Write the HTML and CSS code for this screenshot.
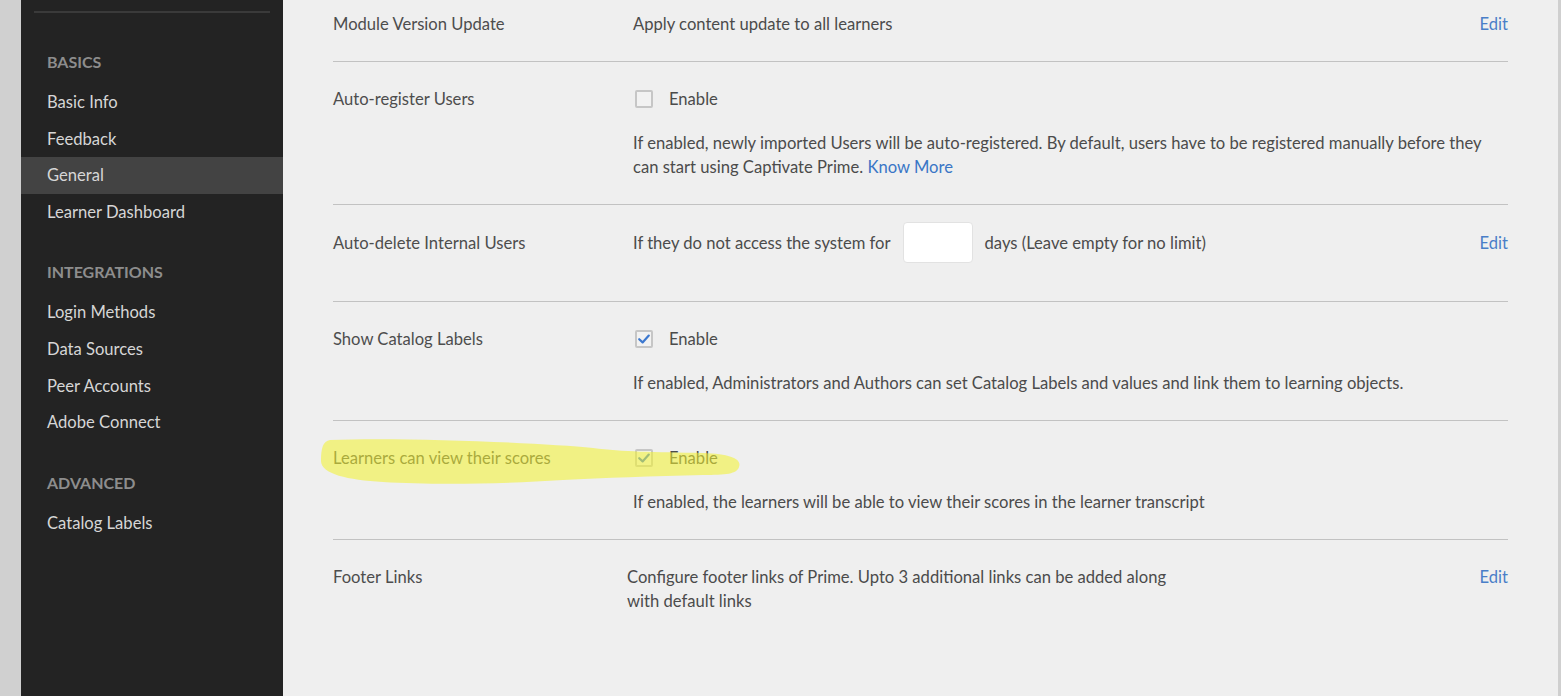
FILE: index.html
```html
<!DOCTYPE html>
<html lang="en">
<head>
<meta charset="utf-8">
<title>General Settings</title>
<link rel="stylesheet" href="styles.css">
</head>
<body>
<div class="app">
  <div class="edge-left"></div>
  <nav class="sidebar">
    <div class="sidebar-rule"></div>
    <div class="nav-group">
      <div class="nav-head">BASICS</div>
      <div class="nav-item">Basic Info</div>
      <div class="nav-item">Feedback</div>
      <div class="nav-item active">General</div>
      <div class="nav-item">Learner Dashboard</div>
    </div>
    <div class="nav-group">
      <div class="nav-head">INTEGRATIONS</div>
      <div class="nav-item">Login Methods</div>
      <div class="nav-item">Data Sources</div>
      <div class="nav-item">Peer Accounts</div>
      <div class="nav-item">Adobe Connect</div>
    </div>
    <div class="nav-group">
      <div class="nav-head">ADVANCED</div>
      <div class="nav-item">Catalog Labels</div>
    </div>
  </nav>
  <main class="main">
    <div class="row row-first">
      <div class="label">Module Version Update</div>
      <div class="value">Apply content update to all learners</div>
      <a class="edit">Edit</a>
    </div>
    <div class="row">
      <div class="label">Auto-register Users</div>
      <div class="value">
        <label class="check"><span class="box"></span><span>Enable</span></label>
        <p class="desc">If enabled, newly imported Users will be auto-registered. By default, users have to be registered manually before they<br>can start using Captivate Prime. <a class="link">Know More</a></p>
      </div>
      <span></span>
    </div>
    <div class="row row-input">
      <div class="label">Auto-delete Internal Users</div>
      <div class="value inline">
        <span>If they do not access the system for</span>
        <span class="days-input"></span>
        <span>days (Leave empty for no limit)</span>
      </div>
      <a class="edit">Edit</a>
    </div>
    <div class="row">
      <div class="label">Show Catalog Labels</div>
      <div class="value">
        <label class="check"><span class="box"><svg viewBox="0 0 18 18" width="18" height="18"><path d="M4.2 9.2 L7.6 12.4 L13.8 5.6" fill="none" stroke="#3c78cf" stroke-width="2.2" stroke-linecap="round" stroke-linejoin="round"/></svg></span><span>Enable</span></label>
        <p class="desc">If enabled, Administrators and Authors can set Catalog Labels and values and link them to learning objects.</p>
      </div>
      <span></span>
    </div>
    <div class="row">
      <div class="label">Learners can view their scores</div>
      <div class="value">
        <label class="check"><span class="box"><svg viewBox="0 0 18 18" width="18" height="18"><path d="M4.2 9.2 L7.6 12.4 L13.8 5.6" fill="none" stroke="#3c78cf" stroke-width="2.2" stroke-linecap="round" stroke-linejoin="round"/></svg></span><span>Enable</span></label>
        <p class="desc">If enabled, the learners will be able to view their scores in the learner transcript</p>
      </div>
      <span></span>
      <svg class="marker" viewBox="0 0 430 50" width="430" height="50" aria-hidden="true"><path d="M 12 4 C 85 1, 225 7, 275 12 C 305 16, 335 16, 385 17 C 413 18, 424 23, 421 31 C 419 38, 408 39, 385 39 C 335 40, 285 42, 245 44 C 185 48, 115 49, 65 46 C 30 44, 3 38, 3 25 C 3 12, 5 5, 12 4 Z" fill="#f3f332"/></svg>
    </div>
    <div class="row row-last">
      <div class="label">Footer Links</div>
      <div class="value shift">Configure footer links of Prime. Upto 3 additional links can be added along<br>with default links</div>
      <a class="edit">Edit</a>
    </div>
  </main>
  <div class="edge-right"></div>
</div>
</body>
</html>
```
FILE: styles.css
```css
* { box-sizing: border-box; }
html, body { margin: 0; padding: 0; height: 100%; }
body {
  font-family: "Lato", "Open Sans", "Liberation Sans", sans-serif;
  font-size: 16.6px;
  color: #4b4b4b;
  background: #efefef;
  overflow: hidden;
}
.app { display: flex; height: 696px; }
.edge-left { width: 21px; flex: none; background: #d0d0d0; }
.edge-right { width: 3px; flex: none; background: #cfcfcf; }
.sidebar {
  width: 262px;
  flex: none;
  background: #232323;
  padding-top: 11px;
}
.sidebar-rule { height: 2px; background: #3a3a3a; margin: 0 13px 29px 13px; }
.nav-group + .nav-group { margin-top: 21.67px; }
.nav-head {
  height: 40px;
  line-height: 40px;
  margin-bottom: 2px;
  padding-left: 26px;
  font-weight: 700;
  font-size: 16px;
  color: #8d8d8d;
}
.nav-item {
  height: 36.67px;
  line-height: 36.67px;
  padding-left: 26px;
  font-size: 16.6px;
  color: #d6d6d6;
}
.nav-item.active { background: #434343; }
.main { flex: 1; padding: 0 50px; }
.row {
  position: relative;
  display: grid;
  grid-template-columns: 300px 1fr auto;
  align-items: start;
  padding: 25px 0;
  border-bottom: 1px solid #c2c2c2;
  line-height: 24px;
}
.row-first { padding-top: 12px; }
.row-last { border-bottom: none; }
.row-input { align-items: center; padding: 17px 0 38px; }
.label { color: #4d4d4d; }
.value { color: #4b4b4b; }
.value.inline { display: flex; align-items: center; }
.value.shift { margin-left: -6px; }
.days-input {
  width: 70px;
  height: 41px;
  background: #ffffff;
  border: 1px solid #e2e2e2;
  border-radius: 4px;
  margin: 0 12px;
}
.edit { color: #4a7ec8; }
.link { color: #3a76c6; }
.check { display: flex; align-items: center; gap: 16px; }
.box {
  width: 18px;
  height: 18px;
  margin-left: 2px;
  border: 2px solid #c6c6c6;
  border-radius: 2px;
  background: #f2f2f2;
  position: relative;
}
.box svg { position: absolute; left: -2px; top: -2px; }
.desc { margin: 20px 0 0 0; }
.marker {
  position: absolute;
  left: -15px;
  top: 15px;
  opacity: 0.56;
  pointer-events: none;
}
```
